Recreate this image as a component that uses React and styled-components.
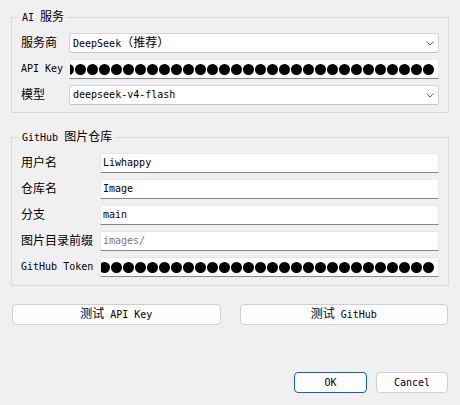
import React from 'react';
import styled, { createGlobalStyle } from 'styled-components';

const GlobalStyle = createGlobalStyle`
	html, body {
		margin: 0;
		background: #f0f0f0;
	}
`;

const Dialog = styled.div`
	box-sizing: border-box;
	width: 460px;
	height: 405px;
	padding: 10px 11px 12px;
	display: flex;
	flex-direction: column;
	background: #f0f0f0;
	color: #000;
	font-family: 'DejaVu Sans Mono', 'Liberation Mono', 'Noto Sans CJK SC', monospace;
	font-size: 10px;
	line-height: 14px;
`;

const Han = styled.span`
	font-family: 'Noto Sans CJK SC', sans-serif;
	font-size: 12px;
	line-height: 12px;
`;

const Group = styled.fieldset`
	margin: 0;
	min-width: 0;
	padding: 9px 9px 7px;
	border: 1px solid #dadada;

	& + & {
		margin-top: 17px;
		padding-bottom: 8px;
	}
`;

const Title = styled.legend`
	box-sizing: border-box;
	height: 14px;
	margin-left: -2px;
	padding: 0 3px;
	line-height: 14px;
	white-space: nowrap;
`;

const Form = styled.div`
	display: grid;
	grid-template-columns: ${(p) => p.$label}px 1fr;
	grid-auto-rows: 20px;
	column-gap: 6px;
	row-gap: 6px;
	align-items: center;
`;

const Label = styled.span`
	white-space: nowrap;
`;

const Combo = styled.div`
	box-sizing: border-box;
	height: 20px;
	display: flex;
	align-items: center;
	justify-content: space-between;
	padding: 0 4px 0 3px;
	background: #fff;
	border: 1px solid #d3d3d3;
	border-bottom-color: #c2c2c2;
	border-radius: 3px;
	white-space: nowrap;
`;

const LineEdit = styled.div`
	box-sizing: border-box;
	height: 20px;
	display: flex;
	align-items: center;
	justify-content: ${(p) => (p.$secret ? 'flex-end' : 'flex-start')};
	overflow: hidden;
	padding: ${(p) => (p.$secret ? '0 4px 0 0' : '0 3px 0 2px')};
	background: #fff;
	border: 1px solid #e8e8e8;
	border-bottom-color: #868686;
	border-radius: 2px 2px 0 0;
	color: ${(p) => (p.$placeholder ? '#7a7a7a' : '#000')};
	white-space: nowrap;
`;

const Dot = styled.span`
	flex-shrink: 0;
	width: 11px;
	height: 11px;
	margin-left: 1px;
	border-radius: 50%;
	background: #000;
`;

const TestRow = styled.div`
	display: grid;
	grid-template-columns: 1fr 1fr;
	column-gap: 19px;
	margin-top: 18px;
	padding: 0 1px;
`;

const DialogButtons = styled.div`
	display: flex;
	justify-content: flex-end;
	gap: 9px;
	margin-top: auto;
	padding: 0 1px;
`;

const Button = styled.button`
	box-sizing: border-box;
	height: 21px;
	width: ${(p) => (p.$width ? `${p.$width}px` : 'auto')};
	padding: 0;
	background: #fdfdfd;
	border: 1px solid ${(p) => (p.$default ? '#0067c0' : '#d0d0d0')};
	border-radius: 4px;
	color: #000;
	font: inherit;
	white-space: nowrap;
`;

function Chevron() {
	return (
		<svg width="8" height="5" viewBox="0 0 8 5">
			<polyline points="0.5,0.5 4,4 7.5,0.5" fill="none" stroke="#606060" strokeWidth="1" />
		</svg>
	);
}

function Password({ count = 40 }) {
	return (
		<LineEdit $secret>
			{Array.from({ length: count }, (_, i) => (
				<Dot key={i} />
			))}
		</LineEdit>
	);
}

export default function App() {
	return (
		<>
			<GlobalStyle />
			<Dialog>
				<Group>
					<Title>
						AI <Han>服务</Han>
					</Title>
					<Form $label={42}>
						<Label>
							<Han>服务商</Han>
						</Label>
						<Combo>
							<span>
								DeepSeek<Han>（推荐）</Han>
							</span>
							<Chevron />
						</Combo>
						<Label>API Key</Label>
						<Password />
						<Label>
							<Han>模型</Han>
						</Label>
						<Combo>
							<span>deepseek-v4-flash</span>
							<Chevron />
						</Combo>
					</Form>
				</Group>

				<Group>
					<Title>
						GitHub <Han>图片仓库</Han>
					</Title>
					<Form $label={73}>
						<Label>
							<Han>用户名</Han>
						</Label>
						<LineEdit>Liwhappy</LineEdit>
						<Label>
							<Han>仓库名</Han>
						</Label>
						<LineEdit>Image</LineEdit>
						<Label>
							<Han>分支</Han>
						</Label>
						<LineEdit>main</LineEdit>
						<Label>
							<Han>图片目录前缀</Han>
						</Label>
						<LineEdit $placeholder>images/</LineEdit>
						<Label>GitHub Token</Label>
						<Password />
					</Form>
				</Group>

				<TestRow>
					<Button>
						<Han>测试</Han> API Key
					</Button>
					<Button>
						<Han>测试</Han> GitHub
					</Button>
				</TestRow>

				<DialogButtons>
					<Button $default $width={73}>
						OK
					</Button>
					<Button $width={72}>Cancel</Button>
				</DialogButtons>
			</Dialog>
		</>
	);
}
